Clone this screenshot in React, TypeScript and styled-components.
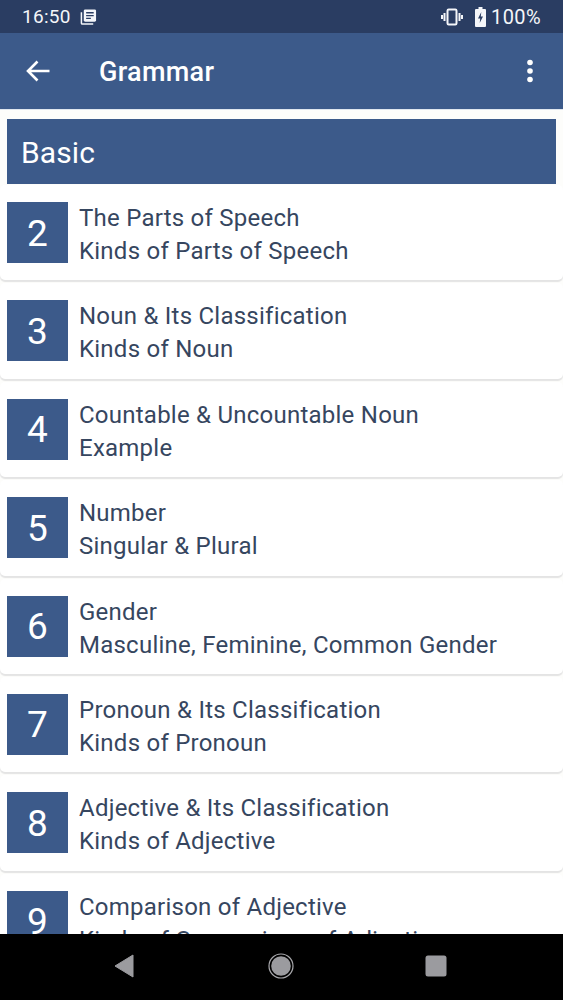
import { createGlobalStyle, styled } from 'styled-components'

const GlobalStyle = createGlobalStyle`
    html, body {
        margin: 0;
        padding: 0;
        background: #fff;
    }
`

const Screen = styled.div`
    width: 563px;
    height: 1000px;
    display: flex;
    flex-direction: column;
    overflow: hidden;
    font-family: Roboto, "Liberation Sans", sans-serif;
    background: #fdfdfb;
`

const StatusBar = styled.div`
    height: 33px;
    flex: none;
    display: flex;
    align-items: center;
    justify-content: space-between;
    padding: 0 22px;
    background: #2a3d62;
    color: #f4f6f9;
    font-size: 19px;
`

const StatusGroup = styled.div<{ $gap?: number }>`
    display: flex;
    align-items: center;
    gap: ${p => p.$gap ?? 0}px;
`

const Clock = styled.span`
    letter-spacing: 0.3px;
`

const Percent = styled.span`
    font-size: 20px;
    letter-spacing: 0.4px;
`

const VibrateIcon = styled.svg`
    margin-right: 7px;
`

const AppBar = styled.div`
    height: 77px;
    flex: none;
    display: flex;
    align-items: center;
    background: #3c5a8a;
    color: #fff;
    border-bottom: 1px solid #dfe6ee;
    box-sizing: border-box;
`

const BackButton = styled.div`
    width: 99px;
    padding-left: 26px;
    box-sizing: border-box;
    display: flex;
    align-items: center;
`

const AppTitle = styled.div`
    flex: 1;
    font-size: 27px;
    font-weight: 500;
    letter-spacing: 0.3px;
    margin-top: 1px;
`

const MenuButton = styled.div`
    width: 66px;
    display: flex;
    justify-content: center;
`

const List = styled.div`
    flex: 1;
    min-height: 0;
    overflow: hidden;
    padding-top: 9px;
`

const SectionHeader = styled.div`
    height: 65px;
    margin: 0 7px 1px;
    padding: 2px 0 0 14px;
    box-sizing: border-box;
    display: flex;
    align-items: center;
    background: #3c5a8a;
    color: #fff;
    font-size: 30px;
    letter-spacing: 0.1px;
`

const Card = styled.div`
    height: 95.4px;
    margin-bottom: 3px;
    padding: 17px 7px 0;
    box-sizing: border-box;
    display: flex;
    gap: 11px;
    background: #fff;
    border-radius: 5px;
    box-shadow: 0 2px 1px #e4e4e4;
`

const NumberBox = styled.div`
    width: 61px;
    height: 61px;
    flex: none;
    display: flex;
    align-items: center;
    justify-content: center;
    background: #3c5a8a;
    color: #fff;
    font-size: 37px;
    padding-top: 1px;
    box-sizing: border-box;
`

const CardText = styled.div`
    color: #36465f;
    font-size: 24px;
    line-height: 33px;
    letter-spacing: 0.24px;
    white-space: nowrap;
`

const NavBar = styled.div`
    height: 66px;
    flex: none;
    display: grid;
    grid-template-columns: 156px 158px 152px;
    align-items: center;
    justify-items: center;
    background: #000;
    padding: 0 0 2px 46px;
    box-sizing: border-box;
`

const lessons = [
    { number: 2, title: 'The Parts of Speech', sub: 'Kinds of Parts of Speech' },
    { number: 3, title: 'Noun & Its Classification', sub: 'Kinds of Noun' },
    { number: 4, title: 'Countable & Uncountable Noun', sub: 'Example' },
    { number: 5, title: 'Number', sub: 'Singular & Plural' },
    { number: 6, title: 'Gender', sub: 'Masculine, Feminine, Common Gender' },
    { number: 7, title: 'Pronoun & Its Classification', sub: 'Kinds of Pronoun' },
    { number: 8, title: 'Adjective & Its Classification', sub: 'Kinds of Adjective' },
    { number: 9, title: 'Comparison of Adjective', sub: 'Kinds of Comparison of Adjective' },
]

export default function App() {
    return (
        <Screen>
            <GlobalStyle />

            {/* status bar */}
            <StatusBar>
                <StatusGroup $gap={9}>
                    <Clock>16:50</Clock>
                    <svg width="17" height="18" viewBox="0 0 18 18" fill="none">
                        <rect x="4" y="1" width="13" height="13" rx="1.5" fill="#f4f6f9" />
                        <path d="M6.5 4.5h8M6.5 7.5h8M6.5 10.5h5" stroke="#2a3d62" strokeWidth="1.4" />
                        <path d="M1.5 4v11.500a1 1 0 0 0 1 1H14" stroke="#f4f6f9" strokeWidth="1.6" />
                    </svg>
                </StatusGroup>
                <StatusGroup $gap={5}>
                    <VibrateIcon width="22" height="18" viewBox="0 0 22 18" fill="none">
                        <rect x="6.500" y="1.500" width="9" height="15" rx="1.2" stroke="#f4f6f9" strokeWidth="2" />
                        <path d="M3.500 5v8M18.500 5v8" stroke="#f4f6f9" strokeWidth="2" />
                        <path d="M1 7v4M21 7v4" stroke="#f4f6f9" strokeWidth="2" />
                    </VibrateIcon>
                    <svg width="11" height="20" viewBox="0 0 11 20">
                        <path d="M3.500 0h4v2H10a1 1 0 0 1 1 1v16a1 1 0 0 1-1 1H1a1 1 0 0 1-1-1V3a1 1 0 0 1 1-1h2.500z" fill="#f4f6f9" />
                        <path d="M6.300 5 3 11.500h2.200L4.700 16 8 9.500H5.800z" fill="#2a3d62" />
                    </svg>
                    <Percent>100%</Percent>
                </StatusGroup>
            </StatusBar>

            {/* app bar */}
            <AppBar>
                <BackButton>
                    <svg width="24" height="22" viewBox="0 0 24 22" fill="none">
                        <path d="M23.500 11H2.500M11.500 1.500 2 11l9.500 9.500" stroke="#fff" strokeWidth="2.600" />
                    </svg>
                </BackButton>
                <AppTitle>Grammar</AppTitle>
                <MenuButton>
                    <svg width="8" height="24" viewBox="0 0 8 24" fill="#fff">
                        <circle cx="4" cy="3.500" r="2.800" />
                        <circle cx="4" cy="12" r="2.800" />
                        <circle cx="4" cy="20.500" r="2.800" />
                    </svg>
                </MenuButton>
            </AppBar>

            {/* list */}
            <List>
                <SectionHeader>Basic</SectionHeader>
                {lessons.map(lesson => (
                    <Card key={lesson.number}>
                        <NumberBox>{lesson.number}</NumberBox>
                        <CardText>
                            {lesson.title}
                            <br />
                            {lesson.sub}
                        </CardText>
                    </Card>
                ))}
            </List>

            {/* nav bar */}
            <NavBar>
                <svg width="20" height="24" viewBox="0 0 20 24" fill="#9b9b9f">
                    <path d="M19 1v22L1 12z" stroke="#9b9b9f" strokeLinejoin="round" />
                </svg>
                <svg width="26" height="26" viewBox="0 0 26 26">
                    <circle cx="13" cy="13" r="12" fill="none" stroke="#a8a8ac" strokeWidth="1.200" />
                    <circle cx="13" cy="13" r="9.800" fill="#9b9b9f" />
                </svg>
                <svg width="22" height="22" viewBox="0 0 22 22">
                    <rect width="21" height="21" x="0.500" y="0.500" rx="2.500" fill="#9b9b9f" />
                </svg>
            </NavBar>
        </Screen>
    )
}
